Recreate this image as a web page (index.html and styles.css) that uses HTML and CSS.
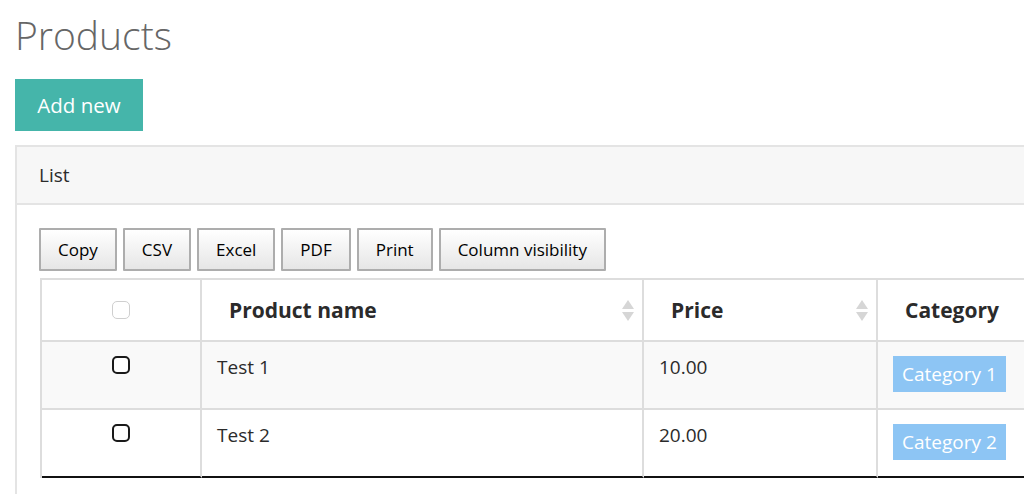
FILE: index.html
```html
<!DOCTYPE html>
<html lang="en">
<head>
<meta charset="utf-8">
<title>Products</title>
<link rel="stylesheet" href="styles.css">
</head>
<body>
<div class="page">
  <h1 class="title">Products</h1>
  <a class="btn-add" href="#">Add new</a>
  <div class="panel">
    <div class="panel-heading">List</div>
    <div class="panel-body">
      <div class="dt-buttons">
        <button class="dt-btn">Copy</button>
        <button class="dt-btn">CSV</button>
        <button class="dt-btn">Excel</button>
        <button class="dt-btn">PDF</button>
        <button class="dt-btn">Print</button>
        <button class="dt-btn">Column visibility</button>
      </div>
      <table class="grid">
        <colgroup>
          <col class="c-check">
          <col class="c-name">
          <col class="c-price">
          <col class="c-cat">
        </colgroup>
        <thead>
          <tr>
            <th class="th-check"><span class="cbox cbox-head"></span></th>
            <th><div class="th-inner"><span>Product name</span>
              <svg class="sort" width="12" height="21" viewBox="0 0 12 21"><polygon points="6,0 12,9 0,9"/><polygon points="0,12 12,12 6,21"/></svg></div></th>
            <th><div class="th-inner"><span>Price</span>
              <svg class="sort" width="12" height="21" viewBox="0 0 12 21"><polygon points="6,0 12,9 0,9"/><polygon points="0,12 12,12 6,21"/></svg></div></th>
            <th><div class="th-inner"><span>Category</span></div></th>
          </tr>
        </thead>
        <tbody>
          <tr class="odd">
            <td class="td-check"><span class="cbox"></span></td>
            <td class="td-text">Test 1</td>
            <td class="td-text">10.00</td>
            <td><span class="label">Category 1</span></td>
          </tr>
          <tr class="even">
            <td class="td-check"><span class="cbox"></span></td>
            <td class="td-text">Test 2</td>
            <td class="td-text">20.00</td>
            <td><span class="label">Category 2</span></td>
          </tr>
        </tbody>
      </table>
    </div>
  </div>
</div>
</body>
</html>
```
FILE: styles.css
```css
html, body {
  margin: 0;
  padding: 0;
  overflow: hidden;
  background: #ffffff;
}

body {
  font-family: "Open Sans", "Noto Sans", sans-serif;
  color: #2b2b2b;
  font-size: 19px;
}

.page {
  padding-left: 15px;
  width: 1300px;
}

.title {
  margin: 11px 0 0 0;
  font-size: 39px;
  line-height: 48px;
  font-weight: 300;
  color: #666666;
}

.btn-add {
  display: inline-flex;
  align-items: center;
  justify-content: center;
  margin-top: 20px;
  width: 128px;
  height: 52px;
  box-sizing: border-box;
  background: #45b5aa;
  color: #ffffff;
  font-size: 20.5px;
  text-decoration: none;
}

.panel {
  margin-top: 14px;
  width: 1250px;
  border: 2px solid #e4e4e4;
  border-right: none;
  background: #ffffff;
}

.panel-heading {
  height: 58px;
  box-sizing: border-box;
  padding: 0 22px;
  display: flex;
  align-items: center;
  background: #f7f7f7;
  border-bottom: 2px solid #e4e4e4;
  font-size: 19px;
  color: #2b2b2b;
}

.panel-body {
  padding: 23px 22px 30px 22px;
}

.dt-buttons {
  display: flex;
  gap: 6px;
}

.dt-btn {
  height: 43px;
  padding: 0 17px;
  box-sizing: border-box;
  border: 2px solid #adadad;
  border-radius: 1px;
  background: linear-gradient(to bottom, #ffffff 0%, #e6e6e6 100%);
  font-family: "Open Sans", "Noto Sans", sans-serif;
  font-size: 17px;
  color: #000000;
}

.grid {
  margin: 7px 0 0 1px;
  border-spacing: 0;
  table-layout: fixed;
  width: 1138px;
  border-top: 2px solid #dddddd;
  border-left: 2px solid #dddddd;
}

.c-check { width: 160px; }
.c-name { width: 442px; }
.c-price { width: 234px; }
.c-cat { width: 300px; }

.grid th,
.grid td {
  border-right: 2px solid #dddddd;
  border-bottom: 2px solid #dddddd;
  box-sizing: border-box;
}

.grid th {
  height: 62px;
  padding: 0;
  vertical-align: middle;
  text-align: left;
  font-size: 21px;
  font-weight: 700;
  color: #2b2b2b;
  background: #ffffff;
}

.th-inner {
  display: flex;
  align-items: center;
  justify-content: space-between;
  padding: 0 8px 0 27px;
}

.sort {
  fill: #d6d6d6;
  display: block;
}

.th-check .cbox {
  margin: 0 auto;
}

.grid td {
  padding: 14px 15px 16px 15px;
  line-height: 26px;
  vertical-align: top;
  font-size: 19px;
  color: #2b2b2b;
}

.grid td.td-text {
  padding-top: 12px;
}

.grid tbody tr:last-child td {
  border-bottom-color: #111111;
}

.odd td { background: #f9f9f9; }
.even td { background: #ffffff; }

.td-check .cbox {
  margin: 0 auto;
}

.cbox {
  display: block;
  width: 18px;
  height: 18px;
  box-sizing: border-box;
  border: 2px solid #1a1a1a;
  border-radius: 5px;
  background: #ffffff;
}

.cbox-head {
  border-width: 1.5px;
  border-color: #cfcfcf;
}

.label {
  display: inline-block;
  vertical-align: top;
  padding: 5px 9px;
  line-height: 26px;
  background: #8dc5f4;
  color: #ffffff;
  font-size: 19px;
}
```
